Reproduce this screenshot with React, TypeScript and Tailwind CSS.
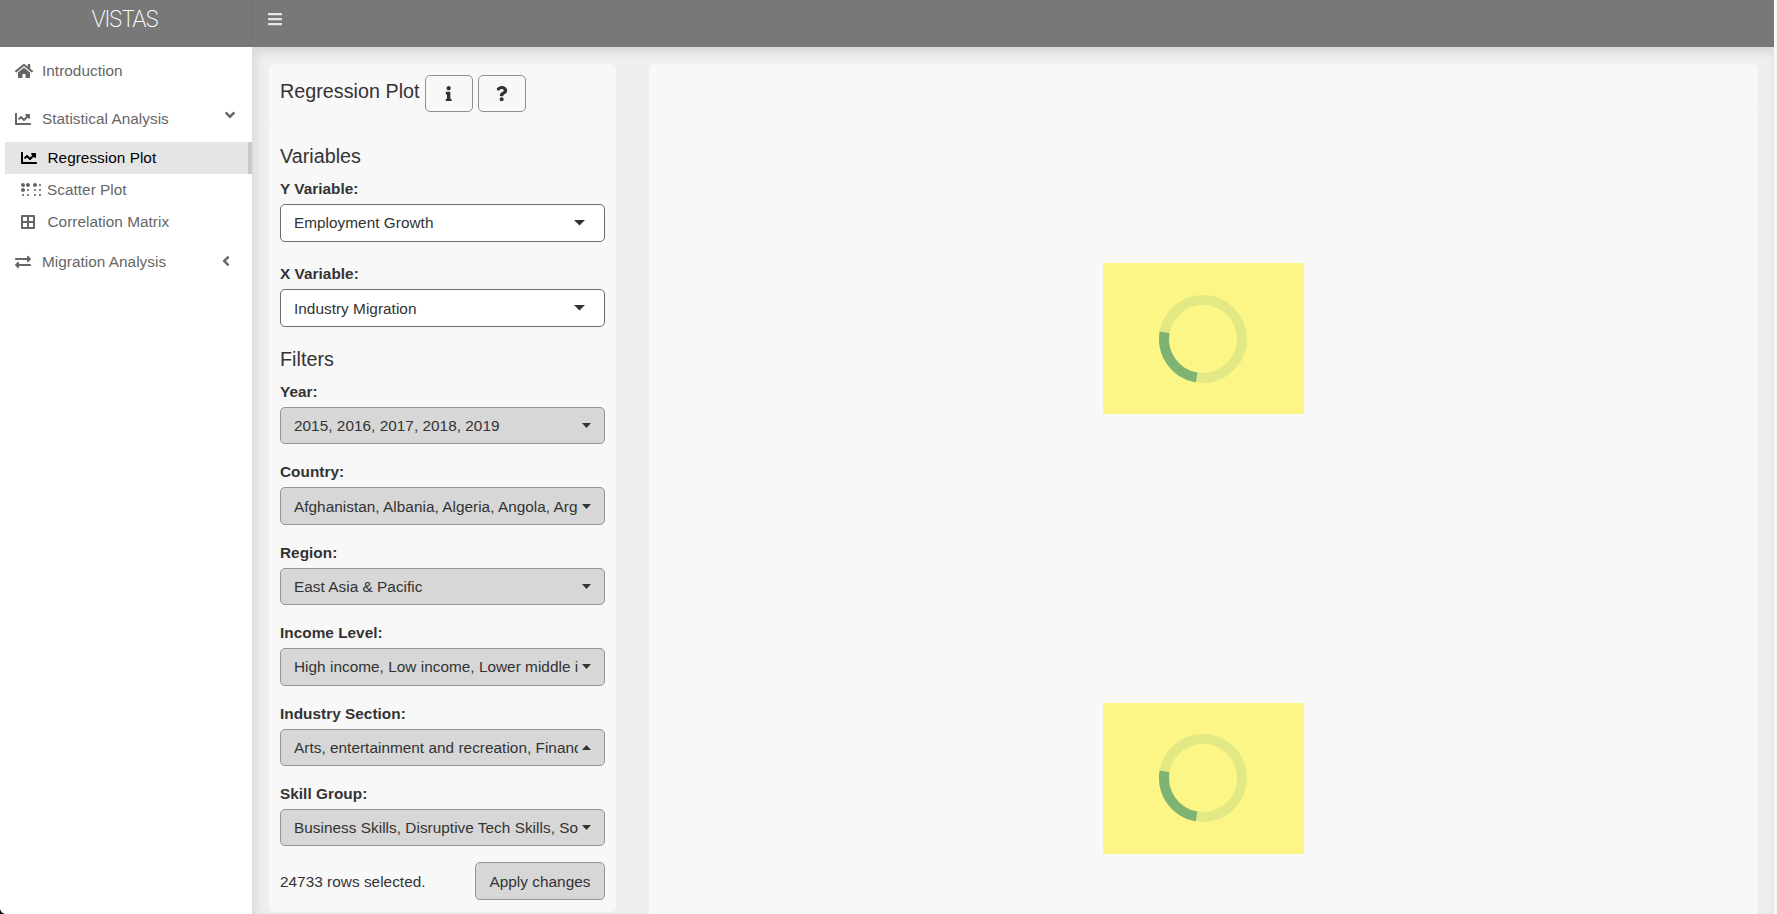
import React from "react";
import { FaHome, FaChartLine, FaBars, FaInfo, FaQuestion, FaBraille, FaBorderAll, FaExchangeAlt, FaAngleLeft, FaAngleDown } from "react-icons/fa";

function Caret({ up = false, wide = false }: { up?: boolean; wide?: boolean }) {
  return (
    <svg className={wide ? "mr-[19px] h-[5.5px] w-[11px] shrink-0" : "mr-[13px] h-[5px] w-[9px] shrink-0"} viewBox="0 0 10 5" preserveAspectRatio="none">
      <path d={up ? "M0 5L5 0L10 5Z" : "M0 0H10L5 5Z"} fill="#333" />
    </svg>
  );
}

function Field({ label, value, up = false, plain = false, height }: { label: string; value: string; up?: boolean; plain?: boolean; height: string }) {
  return (
    <div className={height}>
      <div className="h-[26px] font-bold leading-[22px]">{label}</div>
      <div className={"flex h-[37.5px] items-center rounded-[5px] border pl-[13px] " + (plain ? "border-[#6c6c6c] bg-white" : "border-[#949494] bg-[#d7d7d7]")}>
        <span className={"overflow-hidden whitespace-nowrap pt-px leading-[22px] " + (plain ? "grow" : "mr-[4px] w-[284px]")}>{value}</span>
        <Caret up={up} wide={plain} />
      </div>
    </div>
  );
}

function Spinner({ className }: { className: string }) {
  return (
    <div className={"flex h-[151px] w-[201px] items-center justify-center bg-[#fcf686] pr-[2px] " + className}>
      <svg className="h-[88px] w-[88px]" viewBox="-44 -44 88 88">
        <circle r="39" fill="none" stroke="#e2e984" strokeWidth="10" />
        <path d="M-38.4 -6.6A39 39 0 0 0 -6.4 38.5" fill="none" stroke="#7fb374" strokeWidth="10" />
      </svg>
    </div>
  );
}

export default function App() {
  return (
    <div className="relative flex h-[914px] w-[1777px] overflow-hidden bg-[#f9f9f9] font-['Liberation_Sans',Arial,sans-serif] text-[15.34px] tracking-[0.035px] text-[#333]">
      <div className="flex w-[1774px] flex-col">
        <header className="flex h-[47px] shrink-0 bg-[#787878]">
          <div className="flex h-[38px] w-[252px] items-center justify-center border-r border-[#707070] pr-[2px] font-['Inter',sans-serif] text-[22.5px] font-extralight tracking-[-1.5px] text-white">VISTAS</div>
          <FaBars className="mt-[11px] ml-[15.5px] h-[16px] w-[14px] text-[#e6e6e6]" />
        </header>
        <div className="flex min-h-0 grow">
          <nav className="w-[252px] shrink-0 bg-white text-[#666]">
            <div className="flex h-[48px] items-center pl-[15px]">
              <FaHome className="h-[16px] w-[18px]" />
              <span className="ml-[9px]">Introduction</span>
            </div>
            <div className="flex h-[47px] items-center pl-[15px]">
              <FaChartLine className="h-[16px] w-[16px]" />
              <span className="ml-[11px] grow">Statistical Analysis</span>
              <FaAngleDown className="mr-[14.5px] mb-[7px] h-[16px] w-[16px]" />
            </div>
            <div className="ml-[5px] flex h-[32px] items-center border-r-4 border-[#c8c8c8] bg-[#e5e5e5] pl-[15.5px] text-black">
              <FaChartLine className="h-[16px] w-[16px]" />
              <span className="ml-[11px]">Regression Plot</span>
            </div>
            <div className="flex h-[32px] items-center pl-[20.5px]">
              <FaBraille className="h-[16px] w-[20px]" />
              <span className="ml-[6.5px]">Scatter Plot</span>
            </div>
            <div className="flex h-[32px] items-center pl-[20.5px]">
              <FaBorderAll className="h-[16px] w-[14px]" />
              <span className="ml-[13px]">Correlation Matrix</span>
            </div>
            <div className="flex h-[48px] items-center pl-[15px]">
              <FaExchangeAlt className="h-[16px] w-[16px]" />
              <span className="ml-[11px] grow">Migration Analysis</span>
              <FaAngleLeft className="mr-[18px] mb-[3px] h-[16px] w-[16px]" />
            </div>
          </nav>
          <main className="flex grow items-start border-r border-[#e3e3e3] bg-[#efefef] pt-[17px] pl-[17px] shadow-[inset_0_9px_9px_-3px_#dadada,inset_7px_0_8px_-3px_#dcdcdc]">
            <section className="h-[847.5px] w-[347px] shrink-0 rounded-[5px] bg-[#f8f8f8]">
              <div className="flex h-[60px] items-start border-b border-[#f2f2f2] pt-[11px] pl-[11px]">
                <h3 className="w-[145px] whitespace-nowrap text-[19.72px] leading-[33px]">Regression Plot</h3>
                <button className="flex h-[37px] w-[48px] items-center justify-center rounded-[5px] border border-[#8f8f8f]"><FaInfo className="h-[15.34px]" /></button>
                <button className="ml-[5px] flex h-[37px] w-[48px] items-center justify-center rounded-[5px] border border-[#8f8f8f]"><FaQuestion className="h-[15.34px]" /></button>
              </div>
              <div className="px-[11px]">
                <h4 className="h-[54px] pt-[20px] text-[19.72px] leading-[24px]">Variables</h4>
                <Field label="Y Variable:" value="Employment Growth" plain height="h-[85.4px]" />
                <Field label="X Variable:" value="Industry Migration" plain height="h-[82.6px]" />
                <h4 className="h-[35px] text-[19.72px] leading-[26px]">Filters</h4>
                <Field label="Year:" value="2015, 2016, 2017, 2018, 2019" height="h-[80.4px]" />
                <Field label="Country:" value="Afghanistan, Albania, Algeria, Angola, Argentina" height="h-[80.4px]" />
                <Field label="Region:" value="East Asia & Pacific" height="h-[80.4px]" />
                <Field label="Income Level:" value="High income, Low income, Lower middle income" height="h-[80.4px]" />
                <Field label="Industry Section:" value="Arts, entertainment and recreation, Financial" up height="h-[80.4px]" />
                <Field label="Skill Group:" value="Business Skills, Disruptive Tech Skills, So" height="h-[79.5px]" />
                <div className="flex h-[38px] items-center justify-between">
                  <span className="pt-px">24733 rows selected.</span>
                  <button className="h-[38px] w-[130px] rounded-[5px] border border-[#949494] bg-[#d7d7d7] pt-px">Apply changes</button>
                </div>
              </div>
            </section>
            <section className="ml-[33px] flex h-[850px] w-[1109px] flex-col items-center rounded-t-[5px] bg-[#f8f8f8]">
              <div className="h-[44px] w-full border-b border-[#f3f3f3]" />
              <Spinner className="mt-[155px]" />
              <Spinner className="mt-[288.5px]" />
            </section>
          </main>
        </div>
      </div>
      <svg className="absolute bottom-0 left-0 h-[5px] w-[5px]" viewBox="0 0 5 5"><path d="M0 0Q1 4 5 5H0Z" fill="#111" /></svg>
    </div>
  );
}
